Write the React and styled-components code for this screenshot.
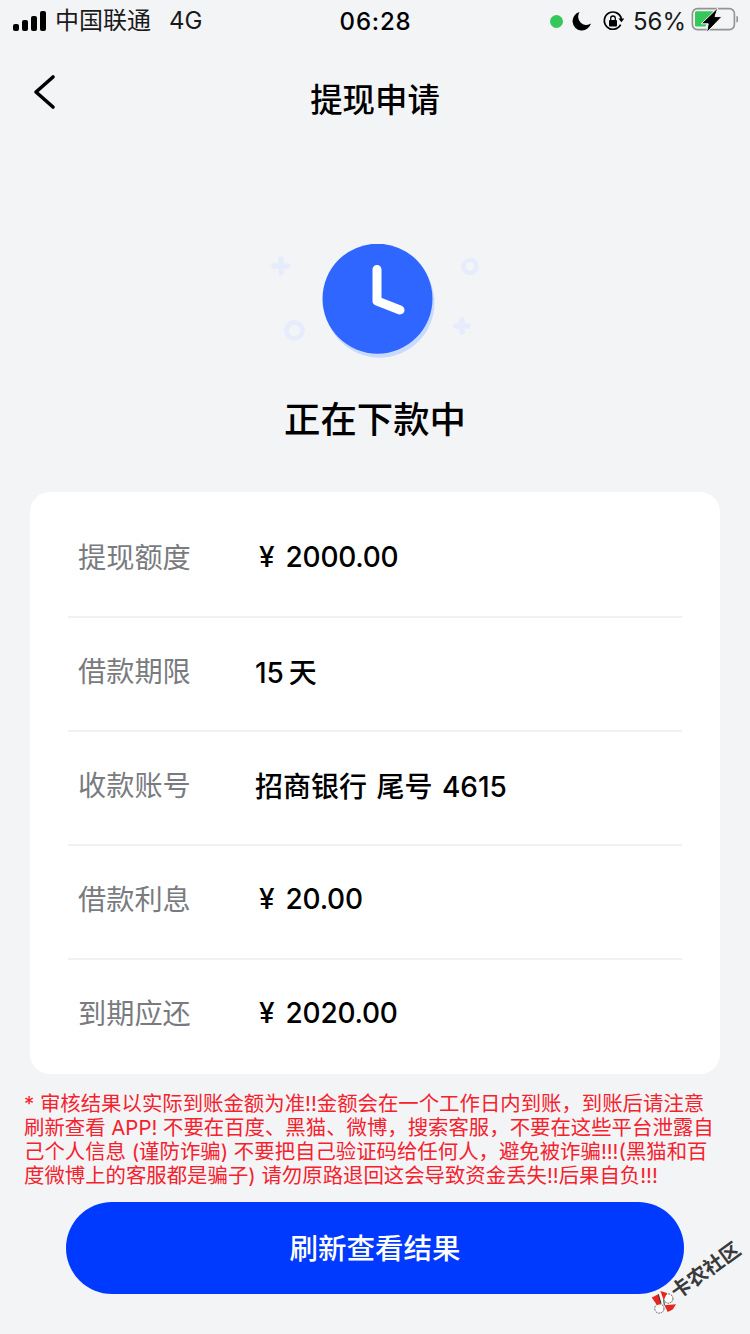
import React from 'react';
import styled, { createGlobalStyle } from 'styled-components';

const GlobalStyle = createGlobalStyle`
  html, body {
    margin: 0;
    padding: 0;
    background: #f3f4f6;
  }
  * {
    box-sizing: border-box;
  }
`;

const details = [
  { label: '提现额度', value: '¥ 2000.00', money: true },
  { label: '借款期限', value: '15\u2009天' },
  { label: '收款账号', value: '招商银行 尾号 4615' },
  { label: '借款利息', value: '¥ 20.00', money: true },
  { label: '到期应还', value: '¥ 2020.00', money: true },
];

const noticeLines = [
  '* 审核结果以实际到账金额为准!!金额会在一个工作日内到账，到账后请注意',
  '刷新查看 APP! 不要在百度、黑猫、微博，搜索客服，不要在这些平台泄露自',
  '己个人信息 (谨防诈骗) 不要把自己验证码给任何人，避免被诈骗!!!(黑猫和百',
  '度微博上的客服都是骗子) 请勿原路退回这会导致资金丢失!!后果自负!!!',
];

export default function App() {
  return (
    <Page>
      <GlobalStyle />
      <StatusBar>
        <StatusSide>
          <Signal>
            <i /><i /><i /><i />
          </Signal>
          <Carrier>中国联通</Carrier>
          <Network>4G</Network>
        </StatusSide>
        <Time>06:28</Time>
        <StatusRight>
          <GreenDot />
          <StatusIcon width="20" height="20" viewBox="0 0 20 20">
            <path d="M7.6 1A9.4 9.4 0 1 0 19 12.6 8.3 8.3 0 0 1 7.6 1Z" fill="#000" />
          </StatusIcon>
          <StatusIcon width="22" height="22" viewBox="0 0 22 22" fill="none">
            <path d="M18.6 14.6A8.6 8.6 0 1 1 19.4 9" stroke="#000" strokeWidth="1.7" />
            <path d="M16.4 8.6h6l-3 3.6Z" fill="#000" />
            <rect x="7" y="10" width="8" height="6.4" rx="1" fill="#000" />
            <path d="M8.7 10V8.3a2.3 2.3 0 0 1 4.6 0V10" stroke="#000" strokeWidth="1.3" />
          </StatusIcon>
          <Percent>56%</Percent>
          <BatteryIcon width="48" height="26" viewBox="0 0 48 26" fill="none">
            <rect x="2.4" y="1.6" width="42" height="21" rx="5" stroke="#939393" strokeWidth="1.6" />
            <path d="M46.4 9v6.6a3.4 3.4 0 0 0 0-6.6Z" fill="#939393" />
            <path d="M5 5.6A1.4 1.4 0 0 1 6.4 4.2H23L15.4 19.6H6.4A1.4 1.4 0 0 1 5 18.2Z" fill="#35c759" />
            <path d="M28 .6 11.2 16.8h7L16.6 25.6 32 9.6h-7Z" fill="#000" stroke="#f3f4f6" strokeWidth="1" />
          </BatteryIcon>
        </StatusRight>
      </StatusBar>

      <NavBar>
        <BackButton>
          <svg width="24" height="36" viewBox="0 0 24 36" fill="none">
            <path d="M21 3 4 18l17 15" stroke="#000" strokeWidth="3.6" strokeLinecap="round" strokeLinejoin="round" />
          </svg>
        </BackButton>
        <Title>提现申请</Title>
      </NavBar>

      <Hero>
        <svg width="210" height="114" viewBox="0 0 210 114" fill="none">
          <g stroke="#e7ecfc" strokeLinecap="round">
            <path d="M4 22h14M11 15v14" strokeWidth="5.4" />
            <path d="M186 82h12M192 76v12" strokeWidth="5.4" />
            <circle cx="200" cy="22.5" r="6.6" strokeWidth="4.4" />
            <circle cx="24.5" cy="86.5" r="8" strokeWidth="4.8" />
          </g>
          <circle cx="109.5" cy="58.7" r="55" fill="#c9daff" />
          <circle cx="107.5" cy="54.7" r="55" fill="#2e66ff" />
          <path d="M107 25.5V57l23 9" stroke="#fff" strokeWidth="9" strokeLinecap="round" strokeLinejoin="round" />
        </svg>
        <StatusText>正在下款中</StatusText>
      </Hero>

      <Card>
        {details.map((item) => (
          <Row key={item.label}>
            <Label>{item.label}</Label>
            <Value $money={item.money}>{item.value}</Value>
          </Row>
        ))}
      </Card>

      <Notice>
        {noticeLines.map((line) => (
          <NoticeLine key={line}>{line}</NoticeLine>
        ))}
      </Notice>

      <RefreshButton>刷新查看结果</RefreshButton>

      <Watermark>
        <LogoMark width="26" height="26" viewBox="0 0 26 26">
          <circle cx="17.8" cy="10.3" r="4.6" fill="#fff" stroke="#333" strokeWidth="0.8" strokeDasharray="2 1" />
          <circle cx="8.8" cy="20.3" r="4.6" fill="#fff" stroke="#333" strokeWidth="0.8" strokeDasharray="2 1" />
          <path d="M1.2 9.3 7.8 6l2.7 9.3L6.5 17ZM9.8 2.7l6.7 2-3.3 7.3ZM13.8 17l11.7-1-3.3 5.3-5 2.4Z" fill="#e5281f" />
          <path d="M7.8 6l2.7 9.3M13.2 12l.6 5" stroke="#222" strokeWidth="0.9" />
        </LogoMark>
        <WatermarkText>卡农社区</WatermarkText>
      </Watermark>
    </Page>
  );
}

const cjk = `Inter, "Noto Sans CJK SC", sans-serif`;

const Page = styled.div`
  position: relative;
  width: 750px;
  height: 1334px;
  overflow: hidden;
  background: #f3f4f6;
  font-family: ${cjk};
  color: #000;
`;

const StatusBar = styled.div`
  height: 42px;
  padding: 0 12px 0 13px;
  display: grid;
  grid-template-columns: 1fr auto 1fr;
  align-items: center;
  font-size: 24px;
`;

const StatusSide = styled.div`
  display: flex;
  align-items: center;
`;

const StatusRight = styled(StatusSide)`
  justify-content: flex-end;
  gap: 9px;
`;

const StatusIcon = styled.svg`
  margin-right: 1px;
`;

const Signal = styled.div`
  display: flex;
  align-items: flex-end;
  gap: 3px;
  height: 20px;
  margin-right: 9px;

  i {
    display: block;
    width: 6px;
    border-radius: 2px;
    background: #000;
  }
  i:nth-child(1) { height: 7px; }
  i:nth-child(2) { height: 11px; }
  i:nth-child(3) { height: 15px; }
  i:nth-child(4) { height: 20px; }
`;

const Carrier = styled.span`
  color: #1a1a1a;
  line-height: 1;
`;

const Network = styled.span`
  margin-left: 18px;
  line-height: 1;
  color: #1a1a1a;
`;

const Time = styled.span`
  font-weight: 500;
  letter-spacing: 0.8px;
`;

const GreenDot = styled.span`
  width: 13px;
  height: 13px;
  border-radius: 50%;
  background: #35c759;
`;

const Percent = styled.span`
  margin-left: -1px;
  margin-right: -5px;
  color: #1a1a1a;
`;

const BatteryIcon = styled.svg`
  margin-top: -3px;
`;

const NavBar = styled.div`
  position: relative;
  height: 116px;
  padding-top: 2px;
  display: flex;
  justify-content: center;
  align-items: center;
`;

const BackButton = styled.div`
  position: absolute;
  left: 32px;
  top: 32px;
  line-height: 0;
`;

const Title = styled.h1`
  margin: 0;
  font-size: 32.4px;
  font-weight: 500;
  line-height: 1;
`;

const Hero = styled.div`
  padding-top: 86px;
  display: flex;
  flex-direction: column;
  align-items: center;
`;

const StatusText = styled.div`
  margin-top: 37px;
  font-size: 36.4px;
  font-weight: 500;
  line-height: 50px;
`;

const Card = styled.div`
  margin: 47px 30px 0;
  height: 582px;
  padding: 12px 38px 0;
  background: #fff;
  border-radius: 20px;
`;

const Row = styled.div`
  height: 114px;
  padding-bottom: 6px;
  display: flex;
  align-items: center;
  border-bottom: 2px solid #f0f1f3;

  &:last-child {
    border-bottom-color: transparent;
  }
`;

const Label = styled.span`
  width: 187px;
  margin-top: -4px;
  padding-left: 10px;
  font-size: 28.2px;
  color: #797b80;
`;

const Value = styled.span`
  font-size: 28px;
  font-weight: 450;
  word-spacing: ${(p) => (p.$money ? '4px' : '2px')};
  letter-spacing: ${(p) => (p.$money ? '-0.25px' : '0')};
  color: #000;
  padding-left: ${(p) => (p.$money ? '4px' : '0')};
`;

const Notice = styled.div`
  margin: 18px 0 0 24px;
  font-size: 20.4px;
  line-height: 24px;
  color: #f5222d;
`;

const NoticeLine = styled.div`
  white-space: nowrap;
`;

const RefreshButton = styled.button`
  display: block;
  width: 618px;
  height: 92px;
  margin: 14px 0 0 66px;
  padding: 0 0 3px;
  border: 0;
  border-radius: 46px;
  background: #0039ff;
  color: #fff;
  font-family: ${cjk};
  font-size: 28.5px;
  font-weight: 500;
`;

const Watermark = styled.div`
  position: absolute;
  left: 643px;
  top: 1265px;
  display: flex;
  align-items: center;
  white-space: nowrap;
  transform: rotate(-36deg);
`;

const LogoMark = styled.svg`
  margin-right: -1px;
  transform: rotate(36deg);
`;

const WatermarkText = styled.span`
  font-size: 20px;
  font-weight: 700;
  color: #3a3a3a;
  line-height: 1;
`;
